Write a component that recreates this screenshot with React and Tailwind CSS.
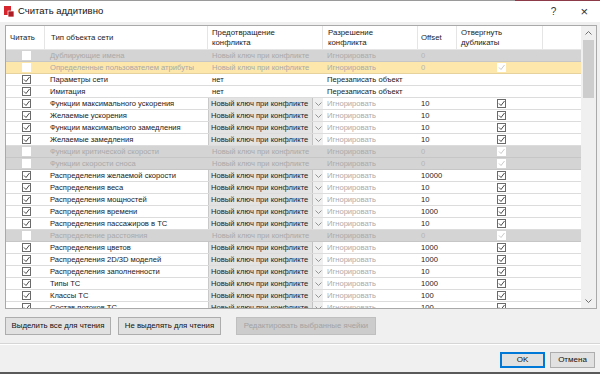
import React from "react";

const font = { fontFamily: '"Liberation Sans", Arial, sans-serif' };

const rows = [
  { name: "Дублирующие имена", kind: "off", offset: "0", dup: "none" },
  { name: "Определенные пользователем атрибуты", kind: "sel", offset: "0", dup: "off" },
  { name: "Параметры сети", kind: "plain" },
  { name: "Имитация", kind: "plain" },
  { name: "Функции максимального ускорения", kind: "drop", offset: "10" },
  { name: "Желаемые ускорения", kind: "drop", offset: "10" },
  { name: "Функции максимального замедления", kind: "drop", offset: "10" },
  { name: "Желаемые замедления", kind: "drop", offset: "10" },
  { name: "Функции критической скорости", kind: "off", offset: "0", dup: "off" },
  { name: "Функции скорости сноса", kind: "off", offset: "0", dup: "off" },
  { name: "Распределения желаемой скорости", kind: "drop", offset: "10000" },
  { name: "Распределения веса", kind: "drop", offset: "10" },
  { name: "Распределения мощностей", kind: "drop", offset: "10" },
  { name: "Распределения времени", kind: "drop", offset: "1000" },
  { name: "Распределения пассажиров в ТС", kind: "drop", offset: "10" },
  { name: "Распределение расстояния", kind: "off", offset: "0", dup: "off" },
  { name: "Распределения цветов", kind: "drop", offset: "1000" },
  { name: "Распределения 2D/3D моделей", kind: "drop", offset: "1000" },
  { name: "Распределения заполненности", kind: "drop", offset: "10" },
  { name: "Типы ТС", kind: "drop", offset: "1000" },
  { name: "Классы ТС", kind: "drop", offset: "100" },
  { name: "Состав потоков ТС", kind: "drop", offset: "100" },
];

function Check({ on = true, disabled = false }) {
  if (disabled) {
    return (
      <svg width="9" height="9" viewBox="0 0 9 9">
        <rect x="0" y="0" width="9" height="9" fill="#fff" />
        {on && <polyline points="2,4.5 4,6.5 7.5,2" fill="none" stroke="#c4c4c4" strokeWidth="0.9" />}
      </svg>
    );
  }
  return (
    <svg width="9" height="9" viewBox="0 0 9 9">
      <rect x="0.5" y="0.5" width="8" height="8" fill="#fff" stroke="#6a6a6a" />
      {on && <polyline points="2,4.5 4,6.5 7.5,2" fill="none" stroke="#333" strokeWidth="0.9" />}
    </svg>
  );
}

function Chevron({ up = false, color = "#777" }) {
  return (
    <svg width="7" height="4" viewBox="0 0 7 4">
      <polyline
        points={up ? "0.5,3.5 3.5,0.5 6.5,3.5" : "0.5,0.5 3.5,3.5 6.5,0.5"}
        fill="none"
        stroke={color}
        strokeWidth="0.9"
      />
    </svg>
  );
}

function Row({ r }) {
  const off = r.kind === "off" || r.kind === "sel";
  const bg =
    r.kind === "off" ? "bg-[#d4d4d4] border-[#c6c6c6]" : r.kind === "sel" ? "bg-[#fde7ab] border-[#e6d29c]" : "bg-white border-[#dcdcdc]";
  return (
    <div className={`flex h-[12px] border-b ${bg} text-[7.6px] leading-[11px] text-[#1a1a1a]`}>
      <div className="w-[39px] flex items-center justify-center pl-[1px]">
        {off ? <Check on={false} disabled /> : <Check />}
      </div>
      <div className={`w-[163px] pl-[5px] whitespace-nowrap overflow-hidden ${off ? "text-[#a9a9a9]" : ""}`}>
        {r.name}
      </div>
      {r.kind === "drop" ? (
        <div className="w-[115px] flex">
          <div className="w-[104px] bg-[#e3e3e3] border-l border-[#c9c9c9] pl-[2px] whitespace-nowrap overflow-hidden">
            Новый ключ при конфликте
          </div>
          <div className="w-[11px] bg-[#efefef] border-l border-[#c3c3c3] flex items-center justify-center">
            <Chevron color="#888" />
          </div>
        </div>
      ) : (
        <div className={`w-[115px] pl-[4px] whitespace-nowrap ${off ? "text-[#a9a9a9]" : ""}`}>
          {off ? "Новый ключ при конфликте" : "нет"}
        </div>
      )}
      <div className={`w-[95px] pl-[4px] whitespace-nowrap ${r.kind === "plain" ? "" : "text-[#ababab]"}`}>
        {r.kind === "plain" ? "Перезаписать объект" : "Игнорировать"}
      </div>
      <div className={`w-[39px] pl-[3px] ${off ? "text-[#b4b4b4]" : ""}`}>{r.offset || ""}</div>
      <div className="w-[86px] flex items-center pl-[40px]">
        {r.kind === "drop" && <Check />}
        {r.dup === "off" && <Check disabled />}
      </div>
      <div className="w-[38px]" />
    </div>
  );
}

function Btn({ children, className = "", disabled = false }) {
  return (
    <div
      className={`h-[18px] flex items-center justify-center border text-[7.8px] ${
        disabled ? "bg-[#cccccc] border-[#bfbfbf] text-[#a3a3a3]" : "bg-[#e1e1e1] border-[#adadad] text-[#111]"
      } ${className}`}
    >
      {children}
    </div>
  );
}

export default function App() {
  return (
    <div className="w-[600px] h-[374px] bg-[#f0f0f0] flex flex-col overflow-hidden" style={font}>
      {/* title bar */}
      <div className="h-[22px] bg-white flex items-center border-t border-[#9a9a9a] relative">
        <div className="ml-[4px] w-[10px] h-[11px] relative">
          <svg width="10" height="11" viewBox="0 0 10 11">
            <rect x="0" y="0" width="7" height="9" fill="#d6252d" />
            <rect x="4" y="5" width="6" height="6" fill="#b01c24" stroke="#fff" strokeWidth="0.7" />
          </svg>
        </div>
        <span className="ml-[4px] text-[9.5px] text-[#111]">Считать аддитивно</span>
        <span className="ml-auto text-[10px] text-[#333] mr-[24px]">?</span>
        <span className="text-[13px] text-[#333] mr-[12px] font-light leading-none">×</span>
        <div className="absolute top-[-1px] right-0 w-[85px] h-[1px] bg-[#8c3a48]" />
      </div>

      {/* grid */}
      <div className="mt-[3px] ml-[5px] mr-[3px] h-[284px] border border-[#a9a9a9] flex bg-white">
        <div className="flex-1 flex flex-col overflow-hidden">
          <div className="flex h-[24px] shrink-0 bg-white text-[7.8px] leading-[10px] text-[#222] border-b border-[#e5e5e5]">
            <div className="w-[39px] pl-[4px] flex items-center border-r border-[#e5e5e5]">Читать</div>
            <div className="w-[163px] pl-[6px] flex items-center border-r border-[#e5e5e5]">Тип объекта сети</div>
            <div className="w-[115px] pl-[4px] flex items-center border-r border-[#e5e5e5]">
              Предотвращение
              <br />
              конфликта
            </div>
            <div className="w-[95px] pl-[5px] flex items-center border-r border-[#e5e5e5]">
              Разрешение
              <br />
              конфликта
            </div>
            <div className="w-[39px] pl-[3px] flex items-center border-r border-[#e5e5e5]">Offset</div>
            <div className="w-[86px] pl-[4px] flex items-center border-r border-[#e5e5e5]">
              Отвергнуть
              <br />
              дубликаты
            </div>
            <div className="w-[38px]" />
          </div>
          <div className="flex-1 overflow-hidden">
            {rows.map((r, i) => (
              <Row key={i} r={r} />
            ))}
          </div>
        </div>
        {/* scrollbar */}
        <div className="w-[15px] bg-[#f0f0f0] flex flex-col items-center">
          <div className="h-[14px] flex items-center justify-center">
            <Chevron up color="#606060" />
          </div>
          <div className="w-[11px] h-[58px] bg-[#cdcdcd]" />
          <div className="flex-1" />
          <div className="h-[14px] flex items-center justify-center">
            <Chevron color="#606060" />
          </div>
        </div>
      </div>

      {/* action buttons */}
      <div className="flex mt-[8px] ml-[5px]">
        <Btn className="w-[106px]">Выделить все для чтения</Btn>
        <Btn className="w-[103px] ml-[7px]">Не выделять для чтения</Btn>
        <Btn className="w-[140px] ml-[15px]" disabled>
          Редактировать выбранные ячейки
        </Btn>
      </div>

      <div className="mt-[8px] h-[2px] border-t border-[#d6d6d6] bg-white" />

      <div className="flex justify-end mt-[7px] mr-[5px] gap-[5px]">
        <div className="w-[45px] h-[16px] flex items-center justify-center bg-[#e1e1e1] border-2 border-[#0078d7] text-[8px] text-[#111]">
          OK
        </div>
        <div className="w-[45px] h-[16px] flex items-center justify-center bg-[#e1e1e1] border border-[#adadad] text-[8px] text-[#111]">
          Отмена
        </div>
      </div>
      <div className="flex-1" />
      <div className="h-[2px] bg-[#5a5a5a]" />
    </div>
  );
}
